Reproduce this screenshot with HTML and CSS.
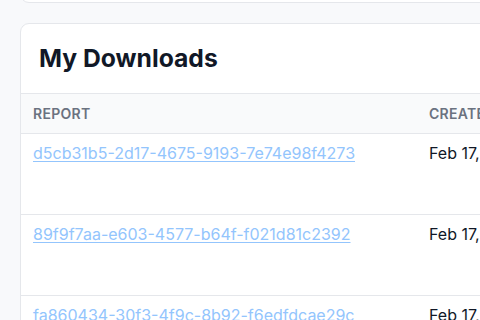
FILE: index.html
```html
<!DOCTYPE html>
<html>
<head>
<meta charset="utf-8">
<link rel="stylesheet" href="styles.css">
</head>
<body>
<div class="page">
  <div class="card prev"></div>
  <div class="card downloads">
    <h1 class="title">My Downloads</h1>
    <table class="table">
      <colgroup><col class="col-report"><col class="col-created"></colgroup>
      <thead>
        <tr><th>Report</th><th>Created At</th></tr>
      </thead>
      <tbody>
        <tr><td><a href="#" class="link">d5cb31b5-2d17-4675-9193-7e74e98f4273</a></td><td class="date">Feb 17, 2025</td></tr>
        <tr><td><a href="#" class="link">89f9f7aa-e603-4577-b64f-f021d81c2392</a></td><td class="date">Feb 17, 2025</td></tr>
        <tr><td><a href="#" class="link">fa860434-30f3-4f9c-8b92-f6edfdcae29c</a></td><td class="date">Feb 17, 2025</td></tr>
      </tbody>
    </table>
  </div>
</div>
</body>
</html>
```
FILE: styles.css
```css
html, body { margin: 0; padding: 0; }
body {
  background: #f8f9fb;
  font-family: Inter, "Noto Sans", sans-serif;
  width: 480px;
  height: 320px;
  overflow: hidden;
}
.page {
  padding-left: 20px;
  display: flex;
  flex-direction: column;
  gap: 20px;
}
.card {
  background: #fff;
  border: 1px solid #e5e7eb;
  border-radius: 9px;
  width: 700px;
  box-sizing: border-box;
}
.prev {
  height: 23px;
  margin-top: -20px;
}
.downloads { overflow: hidden; }
.title {
  margin: 0;
  padding: 19px 18px 20px;
  font-size: 24.7px;
  line-height: 30px;
  font-weight: 700;
  color: #111827;
}
.table {
  border-collapse: collapse;
  width: 100%;
  table-layout: fixed;
}
.col-report { width: 396px; }
.table th {
  background: #f9fafb;
  border-top: 1px solid #e5e7eb;
  border-bottom: 1px solid #e5e7eb;
  height: 39px;
  padding: 0 12px;
  text-align: left;
  text-transform: uppercase;
  font-size: 14px;
  font-weight: 600;
  color: #6b7280;
  letter-spacing: 0.02em;
  white-space: nowrap;
}
.table td {
  border-bottom: 1px solid #e5e7eb;
  height: 81px;
  box-sizing: border-box;
  padding: 9px 12px 0;
  vertical-align: top;
  font-size: 16px;
  line-height: 20px;
  white-space: nowrap;
}
.link {
  color: #93c5fd;
  text-decoration: underline;
  text-underline-offset: 2px;
}
.date { color: #111827; }
```
